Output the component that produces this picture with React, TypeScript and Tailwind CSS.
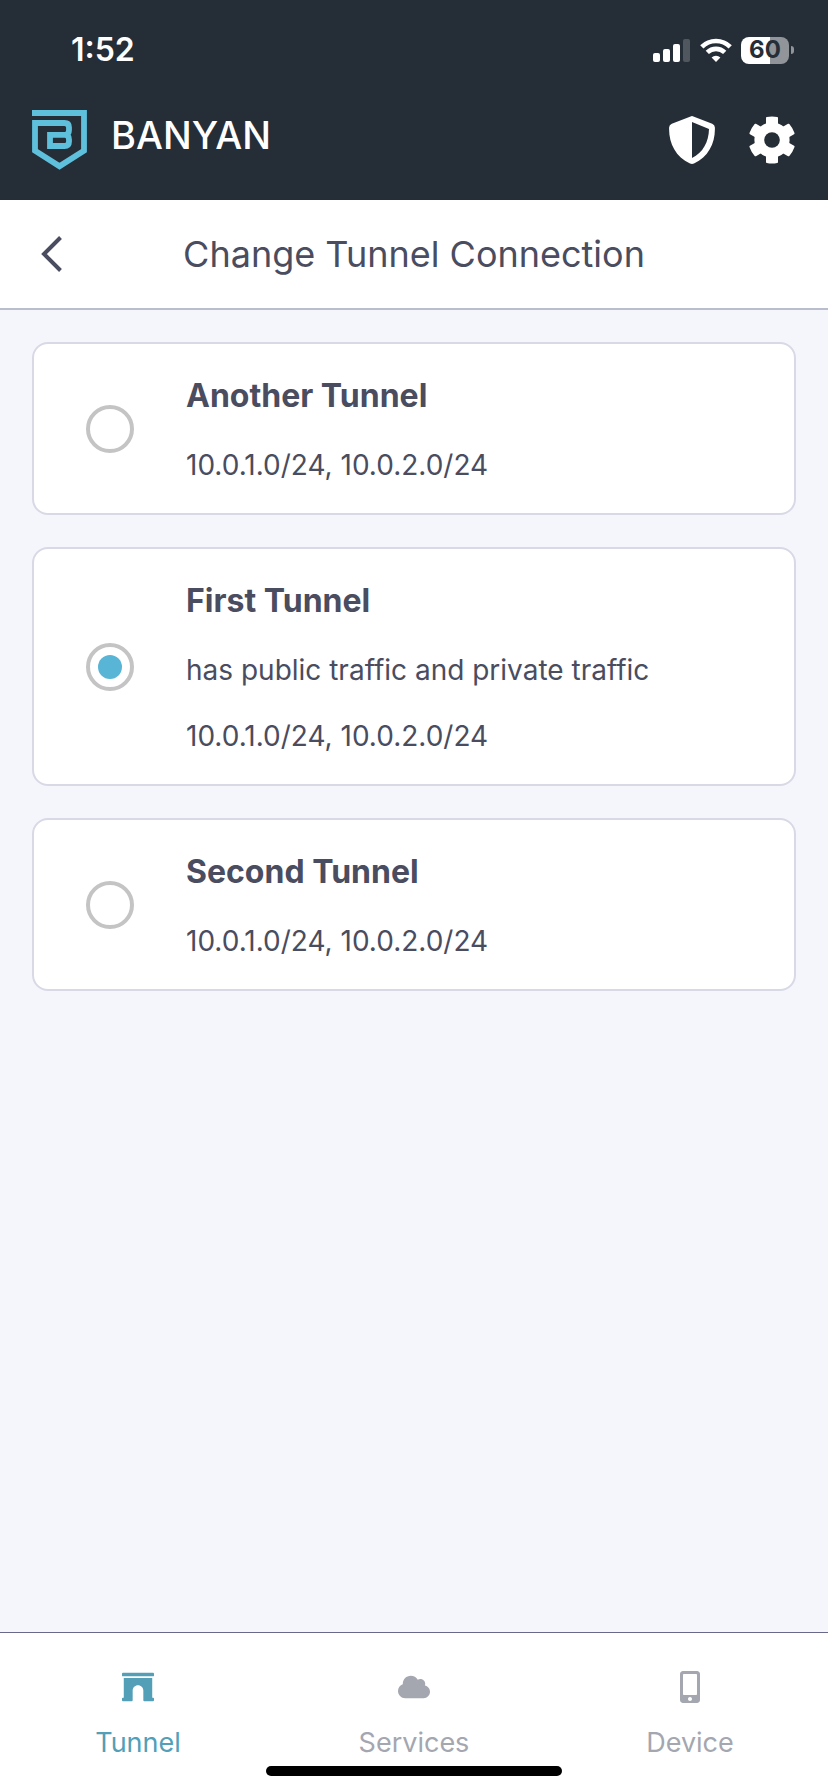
import { useState } from 'react'
import { FaArchway, FaCloud, FaMobileAlt } from 'react-icons/fa'

const tunnels = [
  { id: 'another', name: 'Another Tunnel', description: '', ranges: '10.0.1.0/24, 10.0.2.0/24' },
  {
    id: 'first',
    name: 'First Tunnel',
    description: 'has public traffic and private traffic',
    ranges: '10.0.1.0/24, 10.0.2.0/24',
  },
  { id: 'second', name: 'Second Tunnel', description: '', ranges: '10.0.1.0/24, 10.0.2.0/24' },
]

const tabs = [
  { id: 'tunnel', label: 'Tunnel', Icon: FaArchway },
  { id: 'services', label: 'Services', Icon: FaCloud },
  { id: 'device', label: 'Device', Icon: FaMobileAlt },
]

function SignalIcon() {
  return (
    <svg width="38" height="24" viewBox="0 0 38 24" fill="white" aria-hidden="true">
      <rect x="0" y="15" width="7" height="9" rx="2" />
      <rect x="10" y="11" width="7" height="13" rx="2" />
      <rect x="20" y="6" width="7" height="18" rx="2" />
      <rect x="30" y="1" width="7" height="23" rx="2" opacity="0.2" />
    </svg>
  )
}

function WifiIcon() {
  return (
    <svg width="32" height="24" viewBox="0 0 32 24" fill="none" stroke="white" strokeWidth="4.6" aria-hidden="true">
      <path d="M1.8 8.8a20.2 20.2 0 0 1 28.4 0" />
      <path d="M7.3 14.4a12.4 12.4 0 0 1 17.4 0" />
      <path d="M16 24l-4.4-4.5a6.3 6.3 0 0 1 8.8 0z" fill="white" stroke="none" />
    </svg>
  )
}

function Battery() {
  return (
    <div className="flex items-center gap-[2px]">
      <div className="flex h-[27px] w-12 items-center justify-center rounded-lg bg-linear-to-r from-white from-60% to-[#919599] to-60% text-2xl font-bold text-[#252d37]">
        60
      </div>
      <div className="h-2 w-[3px] rounded-r-full bg-[#919599]" />
    </div>
  )
}

function BanyanLogo() {
  return (
    <svg width="55" height="60" viewBox="0 0 55 60" fill="none" stroke="#5fc0dc" strokeWidth="5.8" aria-hidden="true">
      <path d="M0 3H52V40.6L27.5 56.2L3 40.6V13H32.5Q37 13 37 17.5V20Q37 24.8 33 24.8H18V36H32.5Q37 36 37 31.5V29.5Q37 24.8 33 24.8" />
    </svg>
  )
}

function ShieldIcon() {
  return (
    <svg width="48" height="48" viewBox="0 0 48 48" fill="white" fillRule="evenodd" aria-hidden="true">
      <path d="M22.6 .4Q24 -.2 25.4 .4L44.2 7.8Q46.8 8.9 46.9 11.6C47.3 27 40.5 40.6 26 47.5Q24 48.4 22 47.5C7.5 40.6 .7 27 1.1 11.6Q1.2 8.9 3.8 7.8ZM24 6V42C35 36.6 40.7 26 41 13Z" />
    </svg>
  )
}

function GearIcon() {
  return (
    <svg width="48" height="48" viewBox="0 0 48 48" aria-hidden="true">
      <g fill="white">
        {[0, 60, 120].map((angle) => (
          <path
            key={angle}
            transform={`rotate(${angle} 24 24)`}
            d="M18 2Q18 1.2 18.8 1Q24 0 29.2 1Q30 1.2 30 2V46Q30 46.8 29.2 47Q24 48 18.8 47Q18 46.8 18 46Z"
          />
        ))}
        <circle cx="24" cy="24" r="17.6" />
      </g>
      <circle cx="24" cy="24" r="7.8" fill="#252d37" />
    </svg>
  )
}

export default function App() {
  const [selected, setSelected] = useState('first')
  const [activeTab, setActiveTab] = useState('tunnel')

  return (
    <div className="flex min-h-screen flex-col bg-[#f5f6fb] font-['Inter',sans-serif] text-[#4a4c60]">
      {/* Status bar and brand */}
      <header className="bg-[#252d37] text-white">
        <div className="flex h-[100px] items-center justify-between pr-[34px] pl-[71px]">
          <span className="text-[32px] leading-10 font-semibold">1:52</span>
          <div className="flex items-center gap-[9px]">
            <SignalIcon />
            <WifiIcon />
            <Battery />
          </div>
        </div>
        <div className="flex h-[100px] items-start justify-between px-8 pt-2">
          <div className="flex items-start gap-6 pt-[2px]">
            <BanyanLogo />
            <span className="text-[38px] leading-[50px] font-medium">BANYAN</span>
          </div>
          <div className="flex gap-8 pt-2">
            <button aria-label="Security status">
              <ShieldIcon />
            </button>
            <button aria-label="Settings">
              <GearIcon />
            </button>
          </div>
        </div>
      </header>

      {/* Page title */}
      <div className="grid h-[110px] grid-cols-[1fr_auto_1fr] items-center border-b-2 border-[#b9bdcc] bg-white px-8">
        <button aria-label="Back" className="justify-self-start p-2">
          <svg width="24" height="36" viewBox="0 0 24 36" fill="none" stroke="currentColor" strokeWidth="4" aria-hidden="true">
            <path d="M20.5 1.5L4 18L20.5 34.5" />
          </svg>
        </button>
        <h1 className="text-4xl">Change Tunnel Connection</h1>
      </div>

      {/* Tunnel list */}
      <main className="flex flex-1 flex-col gap-8 p-8">
        {tunnels.map((tunnel) => (
          <label
            key={tunnel.id}
            className="flex items-center gap-[52px] rounded-2xl border-2 border-[#d8d9e5] bg-white pt-[31px] pr-8 pb-[31px] pl-[52px]"
          >
            <input
              type="radio"
              name="tunnel"
              checked={selected === tunnel.id}
              onChange={() => setSelected(tunnel.id)}
              className="grid size-12 shrink-0 appearance-none place-items-center rounded-full border-4 border-[#c4c4c4] before:size-6 before:rounded-full checked:before:bg-[#59b5d5]"
            />
            <span className="flex flex-col gap-8 text-[28px] leading-[34px]">
              <span className="text-[32px] leading-[41px] font-bold">{tunnel.name}</span>
              {tunnel.description && <span>{tunnel.description}</span>}
              <span>{tunnel.ranges}</span>
            </span>
          </label>
        ))}
      </main>

      {/* Bottom tabs */}
      <footer className="border-t border-[#67688a] bg-white pb-4">
        <nav className="grid grid-cols-3 pt-[38px]">
          {tabs.map(({ id, label, Icon }) => (
            <button
              key={id}
              onClick={() => setActiveTab(id)}
              className={`flex flex-col items-center gap-[23px] text-[27px] leading-[34px] ${
                activeTab === id ? 'text-[#529fb7]' : 'text-[#a4a6b0]'
              }`}
            >
              <Icon size={32} />
              <span>{label}</span>
            </button>
          ))}
        </nav>
        <div className="mx-auto mt-[6px] h-[10px] w-[296px] rounded-full bg-black" />
      </footer>
    </div>
  )
}
